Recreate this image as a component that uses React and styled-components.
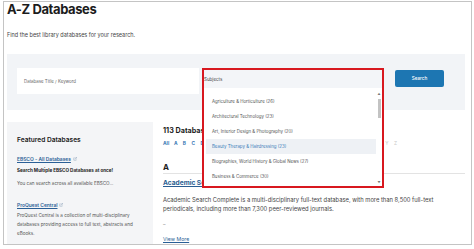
import React from 'react';
import styled, { createGlobalStyle } from 'styled-components';

const Global = createGlobalStyle`
  body {
    margin: 0;
    background: #fff;
    font-family: Inter, "Noto Sans", sans-serif;
  }
`;

const subjects = [
  'Agriculture & Horticulture (26)',
  'Architectural Technology (23)',
  'Art, Interior Design & Photography (20)',
  'Beauty Therapy & Hairdressing (23)',
  'Biographies, World History & Global News (27)',
  'Business & Commerce (30)',
];

const letters = 'ABCDEFGHIJKLMNOPQRSTUVWXYZ'.split('');

const Frame = styled.div`
  margin: 1px 0 0 3px;
  width: 464px;
  height: 242px;
  border: 1px solid #c4c4c4;
  overflow: hidden;
  padding-left: 3px;
  box-sizing: content-box;
`;

const Header = styled.header`
  height: 52px;
`;

const Title = styled.h1`
  margin: 0;
  font-size: 13px;
  line-height: 14px;
  font-weight: 700;
  letter-spacing: -0.4px;
  color: #1c1c1c;
`;

const Lead = styled.p`
  margin: 15px 0 0;
  font-size: 5.5px;
  line-height: 8px;
  color: #444;
`;

const Band = styled.section`
  width: 458px;
  height: 56px;
  background: #f2f4f7;
  display: flex;
  align-items: flex-start;
  padding: 14px 0 0 10px;
  box-sizing: border-box;
`;

const Field = styled.div`
  width: 182px;
  height: 26px;
  background: #fff;
  display: flex;
  align-items: center;
  padding-left: 7px;
  box-sizing: border-box;
  font-size: 4.4px;
  color: #666;
`;

const SelectSlot = styled.div`
  position: relative;
  width: 182px;
  height: 26px;
  margin-left: 3px;
`;

const Dropdown = styled.div`
  position: absolute;
  top: 0;
  left: 0;
  width: 182px;
  height: 120px;
  border: 2px solid #d8181f;
  box-sizing: border-box;
  background: #fff;
  display: flex;
  flex-direction: column;
  z-index: 5;
`;

const DropHead = styled.div`
  height: 18px;
  flex: none;
  background: #f3f5f8;
  display: flex;
  align-items: center;
  font-size: 4.5px;
  color: #444;
`;

const DropBody = styled.div`
  flex: 1;
  display: flex;
`;

const List = styled.ul`
  flex: 1;
  list-style: none;
  margin: 0;
  padding: 5.5px 0 0 2px;
`;

const Option = styled.li`
  height: 15px;
  display: flex;
  align-items: center;
  padding-left: 6px;
  font-size: 4.4px;
  color: ${p => (p.$active ? '#3c7cb8' : '#555')};
  background: ${p => (p.$active ? '#eef1f5' : 'transparent')};
`;

const Scroll = styled.div`
  width: 6px;
  flex: none;
  display: flex;
  flex-direction: column;
  align-items: center;
  padding: 4px 0 1px;
  box-sizing: border-box;
  font-size: 3px;
  line-height: 4px;
  color: #777;
`;

const Thumb = styled.div`
  width: 3px;
  height: 19px;
  background: #c3c3c3;
  margin-top: 3px;
`;

const Button = styled.button`
  margin: 2px 0 0 11px;
  width: 49px;
  height: 17px;
  border: none;
  border-radius: 2px;
  background: #1d76b2;
  color: #fff;
  font-family: inherit;
  font-size: 4.6px;
  font-weight: 500;
  padding: 0;
`;

const Columns = styled.div`
  display: flex;
  gap: 10px;
  margin-top: 12px;
`;

const Sidebar = styled.aside`
  width: 146px;
  height: 140px;
  background: #f4f5f7;
  padding: 14px 0 0 10px;
  box-sizing: border-box;
  font-size: 4.6px;
  line-height: 8px;
`;

const SideTitle = styled.h3`
  margin: 0 0 11px;
  font-size: 6.6px;
  line-height: 8px;
  font-weight: 600;
  color: #222;
`;

const Feature = styled.div`
  margin-bottom: 13px;
`;

const FeatureLink = styled.a`
  display: flex;
  align-items: center;
  gap: 2px;
  font-size: 4.9px;
  line-height: 8px;
  font-weight: 600;
  color: #2a5f96;
  text-decoration: underline;
`;

const Strong = styled.div`
  margin-top: 4px;
  font-size: 4.6px;
  line-height: 8px;
  font-weight: 700;
  color: #222;
`;

const Small = styled.div`
  margin-top: ${p => p.$gap || 0}px;
  width: 127px;
  font-size: 4.6px;
  line-height: 9px;
  color: #555;
`;

const Main = styled.main`
  flex: 1;
  padding-top: 4px;
`;

const Count = styled.h2`
  margin: 0;
  font-size: 7.2px;
  line-height: 9px;
  font-weight: 700;
  color: #1c1c1c;
`;

const Letters = styled.nav`
  display: flex;
  margin-top: 4px;
  font-size: 4.8px;
  line-height: 8px;
  font-weight: 700;
  color: #3a78b5;
`;

const Letter = styled.span`
  flex: none;
  width: ${p => (p.$wide ? '11px' : '8.8px')};
  color: ${p => (p.$off ? '#c8c8c8' : 'inherit')};
  font-weight: ${p => (p.$off ? 400 : 700)};
`;

const Section = styled.div`
  margin-top: 15px;
  width: 302px;
  border-bottom: 1px solid #e3e3e3;
  font-size: 8px;
  line-height: 10px;
  font-weight: 700;
  color: #1c1c1c;
  padding-bottom: 1px;
`;

const DbLink = styled.a`
  display: block;
  margin-top: 5px;
  font-size: 6.6px;
  line-height: 9px;
  font-weight: 700;
  color: #2a5d92;
  text-decoration: underline;
`;

const Desc = styled.p`
  margin: 7px 0 0;
  font-size: 5.8px;
  line-height: 9px;
  color: #444;
  width: 286px;
`;

const Dash = styled.div`
  margin-top: 7px;
  font-size: 5px;
  line-height: 8px;
  color: #777;
`;

const More = styled.a`
  display: block;
  margin-top: 7px;
  font-size: 5.2px;
  line-height: 8px;
  color: #2a5f96;
  text-decoration: underline;
`;

const Ext = () => (
  <svg width="4" height="4" viewBox="0 0 10 10" fill="none" stroke="#8aa0b8" strokeWidth="1.2">
    <path d="M4 2H2v6h6V6M6 1h3v3M9 1L5 5" />
  </svg>
);

export default function App() {
  return (
    <>
      <Global />
      <Frame>
        <Header>
          <Title>A-Z Databases</Title>
          <Lead>Find the best library databases for your research.</Lead>
        </Header>
        <Band>
          <Field>Database Title / Keyword</Field>
          <SelectSlot>
            <Dropdown>
              <DropHead>Subjects</DropHead>
              <DropBody>
                <List>
                  {subjects.map((s, i) => (
                    <Option key={s} $active={i === 3}>{s}</Option>
                  ))}
                </List>
                <Scroll>
                  <span>▲</span>
                  <Thumb />
                  <span style={{ marginTop: 'auto' }}>▼</span>
                </Scroll>
              </DropBody>
            </Dropdown>
          </SelectSlot>
          <Button>Search</Button>
        </Band>
        <Columns>
          <Sidebar>
            <SideTitle>Featured Databases</SideTitle>
            <Feature>
              <FeatureLink>EBSCO - All Databases <Ext /></FeatureLink>
              <Strong>Search Multiple EBSCO Databases at once!</Strong>
              <Small $gap={4}>You can search across all available EBSCO...</Small>
            </Feature>
            <Feature>
              <FeatureLink>ProQuest Central <Ext /></FeatureLink>
              <Small $gap={2}>
                ProQuest Central is a collection of multi-disciplinary databases providing access to full text, abstracts and eBooks.
              </Small>
            </Feature>
          </Sidebar>
          <Main>
            <Count>113 Databases</Count>
            <Letters>
              <Letter $wide>All</Letter>
              {letters.map((l, i) => (
                <Letter key={l} $off={i > 23}>{l}</Letter>
              ))}
            </Letters>
            <Section>A</Section>
            <DbLink>Academic Search Complete</DbLink>
            <Desc>
              Academic Search Complete is a multi-disciplinary full-text database, with more than 8,500 full-text periodicals, including more than 7,300 peer-reviewed journals.
            </Desc>
            <Dash>–</Dash>
            <More>View More</More>
          </Main>
        </Columns>
      </Frame>
    </>
  );
}
